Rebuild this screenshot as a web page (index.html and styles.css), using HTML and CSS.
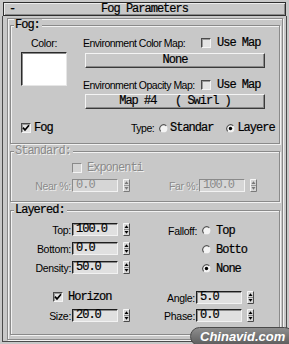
FILE: index.html
```html
<!DOCTYPE html>
<html>
<head>
<meta charset="utf-8">
<link rel="stylesheet" href="styles.css">
</head>
<body>
<div class="title">
  <span class="minus mono">-</span>
  <span class="mono">Fog Parameters</span>
  <span></span>
</div>
<div class="panel">
  <div class="inner">
    <div class="group fog">
      <div class="gtitle mono">Fog:</div>
      <div class="fog-top">
        <div class="color-col">
          <div class="line center">Color:</div>
          <div class="swatch"></div>
        </div>
        <div class="map-col">
          <div class="line"><span class="map-lbl">Environment Color Map:</span><span class="cb"></span><span class="mono use">Use Map</span></div>
          <div class="btn mono">None</div>
          <div class="line gap10"><span class="map-lbl">Environment Opacity Map:</span><span class="cb"></span><span class="mono use">Use Map</span></div>
          <div class="btn btn2 mono">Map #4   ( Swirl )</div>
        </div>
      </div>
      <div class="line fog-row">
        <span class="fog-check"><span class="cb"><svg class="ck" viewBox="0 0 8 8"><path d="M1 3.6L3 6L7 1.2" fill="none" stroke="#000" stroke-width="1.7"/></svg></span><span class="mono">Fog</span></span>
        <span class="type-lbl">Type:</span>
        <svg class="rb" viewBox="0 0 10 10"><circle cx="5" cy="5" r="4.3" fill="#f4f4f4"/><path d="M1.9 8.1A4.4 4.4 0 0 1 8.1 1.9" fill="none" stroke="#5a5a5a" stroke-width="1.3"/></svg><span class="mono">Standar</span>
        <svg class="rb r2" viewBox="0 0 10 10"><circle cx="5" cy="5" r="4.3" fill="#f4f4f4"/><path d="M1.9 8.1A4.4 4.4 0 0 1 8.1 1.9" fill="none" stroke="#5a5a5a" stroke-width="1.3"/><circle cx="5" cy="5" r="1.9" fill="#000"/></svg><span class="mono">Layere</span>
      </div>
    </div>

    <div class="group std">
      <div class="gtitle mono">Standard:</div>
      <div class="line exp-row"><span class="cb dis"></span><span class="mono">Exponenti</span></div>
      <div class="srow">
        <span class="lbl l61">Near %:</span><span class="field dis mono">0.0</span>
        <svg class="spin" viewBox="0 0 7 13"><rect width="7" height="13" fill="#d6d6d6"/><path d="M0.5 12.5V0.5H6.5" fill="none" stroke="#f6f6f6"/><path d="M6.5 0.5V12.5H0.5" fill="none" stroke="#7a7a7a"/><path d="M1 6.5H6" stroke="#9a9a9a"/><path d="M3.5 2.2L5.5 5H1.5Z" fill="#777"/><path d="M1.5 8H5.5L3.5 10.8Z" fill="#777"/></svg>
        <span class="lbl l69">Far %:</span><span class="field dis mono">100.0</span>
        <svg class="spin" viewBox="0 0 7 13"><rect width="7" height="13" fill="#d6d6d6"/><path d="M0.5 12.5V0.5H6.5" fill="none" stroke="#f6f6f6"/><path d="M6.5 0.5V12.5H0.5" fill="none" stroke="#7a7a7a"/><path d="M1 6.5H6" stroke="#9a9a9a"/><path d="M3.5 2.2L5.5 5H1.5Z" fill="#777"/><path d="M1.5 8H5.5L3.5 10.8Z" fill="#777"/></svg>
      </div>
    </div>

    <div class="group layered">
      <div class="gtitle mono">Layered:</div>
      <div class="ltop">
        <div class="spin-col">
          <div class="srow"><span class="lbl l61">Top:</span><span class="field mono">100.0</span>
            <svg class="spin" viewBox="0 0 7 13"><rect width="7" height="13" fill="#d6d6d6"/><path d="M0.5 12.5V0.5H6.5" fill="none" stroke="#f6f6f6"/><path d="M6.5 0.5V12.5H0.5" fill="none" stroke="#4a4a4a"/><path d="M1 6.5H6" stroke="#8a8a8a"/><path d="M3.5 2.2L5.5 5H1.5Z" fill="#000"/><path d="M1.5 8H5.5L3.5 10.8Z" fill="#000"/></svg></div>
          <div class="srow"><span class="lbl l61">Bottom:</span><span class="field mono">0.0</span>
            <svg class="spin" viewBox="0 0 7 13"><rect width="7" height="13" fill="#d6d6d6"/><path d="M0.5 12.5V0.5H6.5" fill="none" stroke="#f6f6f6"/><path d="M6.5 0.5V12.5H0.5" fill="none" stroke="#4a4a4a"/><path d="M1 6.5H6" stroke="#8a8a8a"/><path d="M3.5 2.2L5.5 5H1.5Z" fill="#000"/><path d="M1.5 8H5.5L3.5 10.8Z" fill="#000"/></svg></div>
          <div class="srow"><span class="lbl l61">Density:</span><span class="field mono">50.0</span>
            <svg class="spin" viewBox="0 0 7 13"><rect width="7" height="13" fill="#d6d6d6"/><path d="M0.5 12.5V0.5H6.5" fill="none" stroke="#f6f6f6"/><path d="M6.5 0.5V12.5H0.5" fill="none" stroke="#4a4a4a"/><path d="M1 6.5H6" stroke="#8a8a8a"/><path d="M3.5 2.2L5.5 5H1.5Z" fill="#000"/><path d="M1.5 8H5.5L3.5 10.8Z" fill="#000"/></svg></div>
        </div>
        <div class="falloff">
          <div class="srow"><span class="lbl l68">Falloff:</span><svg class="rb fr" viewBox="0 0 10 10"><circle cx="5" cy="5" r="4.3" fill="#f4f4f4"/><path d="M1.9 8.1A4.4 4.4 0 0 1 8.1 1.9" fill="none" stroke="#5a5a5a" stroke-width="1.3"/></svg><span class="mono">Top</span></div>
          <div class="srow sub"><svg class="rb fr" viewBox="0 0 10 10"><circle cx="5" cy="5" r="4.3" fill="#f4f4f4"/><path d="M1.9 8.1A4.4 4.4 0 0 1 8.1 1.9" fill="none" stroke="#5a5a5a" stroke-width="1.3"/></svg><span class="mono">Botto</span></div>
          <div class="srow sub"><svg class="rb fr" viewBox="0 0 10 10"><circle cx="5" cy="5" r="4.3" fill="#f4f4f4"/><path d="M1.9 8.1A4.4 4.4 0 0 1 8.1 1.9" fill="none" stroke="#5a5a5a" stroke-width="1.3"/><circle cx="5" cy="5" r="1.9" fill="#000"/></svg><span class="mono">None</span></div>
        </div>
      </div>
      <div class="lbottom">
        <div class="lb-left">
          <div class="line hor-row"><span class="cb"><svg class="ck" viewBox="0 0 8 8"><path d="M1 3.6L3 6L7 1.2" fill="none" stroke="#000" stroke-width="1.7"/></svg></span><span class="mono">Horizon</span></div>
          <div class="srow"><span class="lbl l61">Size:</span><span class="field mono">20.0</span>
            <svg class="spin" viewBox="0 0 7 13"><rect width="7" height="13" fill="#d6d6d6"/><path d="M0.5 12.5V0.5H6.5" fill="none" stroke="#f6f6f6"/><path d="M6.5 0.5V12.5H0.5" fill="none" stroke="#4a4a4a"/><path d="M1 6.5H6" stroke="#8a8a8a"/><path d="M3.5 2.2L5.5 5H1.5Z" fill="#000"/><path d="M1.5 8H5.5L3.5 10.8Z" fill="#000"/></svg></div>
        </div>
        <div class="lb-right">
          <div class="srow"><span class="lbl l66">Angle:</span><span class="field mono">5.0</span>
            <svg class="spin" viewBox="0 0 7 13"><rect width="7" height="13" fill="#d6d6d6"/><path d="M0.5 12.5V0.5H6.5" fill="none" stroke="#f6f6f6"/><path d="M6.5 0.5V12.5H0.5" fill="none" stroke="#4a4a4a"/><path d="M1 6.5H6" stroke="#8a8a8a"/><path d="M3.5 2.2L5.5 5H1.5Z" fill="#000"/><path d="M1.5 8H5.5L3.5 10.8Z" fill="#000"/></svg></div>
          <div class="srow"><span class="lbl l66">Phase:</span><span class="field mono">0.0</span>
            <svg class="spin" viewBox="0 0 7 13"><rect width="7" height="13" fill="#d6d6d6"/><path d="M0.5 12.5V0.5H6.5" fill="none" stroke="#f6f6f6"/><path d="M6.5 0.5V12.5H0.5" fill="none" stroke="#4a4a4a"/><path d="M1 6.5H6" stroke="#8a8a8a"/><path d="M3.5 2.2L5.5 5H1.5Z" fill="#000"/><path d="M1.5 8H5.5L3.5 10.8Z" fill="#000"/></svg></div>
        </div>
      </div>
    </div>
  </div>
</div>
<div class="wm">Chinavid.com</div>
</body>
</html>
```

FILE: styles.css
```css
* { box-sizing: border-box; }
html, body { margin: 0; padding: 0; }
body {
  width: 289px; height: 344px; overflow: hidden; position: relative;
  background: #c8c8c8; color: #000;
  font-family: "Liberation Sans", Arial, sans-serif; font-size: 10.5px;
  letter-spacing: -0.3px; white-space: nowrap;
}
.mono {
  font-family: "Liberation Mono", "DejaVu Sans Mono", monospace;
  font-size: 12px; letter-spacing: -1px; white-space: pre;
  -webkit-text-stroke: 0.2px #000;
}
.title {
  margin: 2px 3px 0; height: 14px;
  border: 1px solid #2e2e2e;
  box-shadow: inset 1px 1px 0 #ececec, inset -1px -1px 0 #8a8a8a;
  display: grid; grid-template-columns: 1fr auto 1fr; align-items: center;
  line-height: 12px;
}
.minus { padding-left: 5px; }
.panel {
  margin-left: 2px; width: 285px; height: 326px;
  border: 1px solid #4a4a4a; border-top: 0;
  padding: 2px 3px 1px 4px;
}
.inner {
  height: 100%;
  border: 1px solid #8a8a8a;
  box-shadow: inset 1px 1px 0 #f2f2f2, 1px 1px 0 #f2f2f2;
  padding: 6px 2px 0;
}
.group {
  border: 1px solid #8a8a8a;
  box-shadow: inset 1px 1px 0 #f2f2f2, 1px 1px 0 #f2f2f2;
}
.gtitle {
  width: fit-content; height: 13px; line-height: 13px;
  margin: -7px 0 0 3px; padding: 0 2px 0 1px;
  background: #c8c8c8;
}
.line { display: flex; align-items: center; height: 14px; line-height: 14px; }
.center { justify-content: center; }

/* Fog */
.fog { padding-bottom: 8px; }
.fog-top { display: flex; margin-top: 4px; }
.color-col { margin-left: 10px; width: 46px; }
.swatch {
  margin-top: 2px; width: 46px; height: 34px; background: #fff;
  border: 1px solid; border-color: #2a2a2a #e6e6e6 #e6e6e6 #2a2a2a;
  box-shadow: inset 1px 1px 0 #8a8a8a;
}
.map-col { margin-left: 16px; }
.map-lbl { width: 118px; flex: none; letter-spacing: -0.5px; }
.use { margin-left: 6px; }
.btn {
  margin-top: 3px; margin-left: 2px; width: 180px; height: 15px;
  border: 1px solid; border-color: #f4f4f4 #3a3a3a #3a3a3a #f4f4f4;
  box-shadow: inset -1px -1px 0 #8a8a8a;
  text-align: center; line-height: 13px;
}
.btn2 { margin-top: 2px; }
.gap10 { margin-top: 10px; }
.fog-row { margin-top: 12px; padding-left: 10px; }
.fog-check { width: 110px; display: flex; align-items: center; }
.fog-check .mono { margin-left: 3px; }
.type-lbl { width: 28px; flex: none; letter-spacing: -0.5px; }

.cb {
  width: 10px; height: 10px; flex: none; display: inline-flex;
  background: #e4e4e4;
  border: 1px solid; border-color: #4a4a4a #f4f4f4 #f4f4f4 #4a4a4a;
  box-shadow: inset 1px 1px 0 #9a9a9a;
}
.cb.dis { background: #d4d4d4; border-color: #8a8a8a #f4f4f4 #f4f4f4 #8a8a8a; box-shadow: none; }
.ck { width: 8px; height: 8px; display: block; }
.rb { width: 9px; height: 9px; flex: none; margin-right: 2px; }
.r2 { margin-left: 13px; }

/* Standard */
.std { margin-top: 7px; padding-bottom: 9px; }
.std .mono, .std .lbl { color: #8a8a8a; text-shadow: 1px 1px 0 #efefef; -webkit-text-stroke: 0; }
.exp-row { margin-top: 3px; padding-left: 61px; }
.exp-row .mono { margin-left: 5px; }
.std .srow { margin-top: 4px; }

.srow { display: flex; align-items: center; height: 13px; }
.lbl { text-align: right; padding-right: 1px; flex: none; }
.l61 { width: 61px; }
.l66 { width: 66px; }
.l68 { width: 68px; }
.l69 { width: 69px; }
.field {
  width: 46px; height: 13px; flex: none;
  display: flex; align-items: center; padding-left: 3px;
  background: #e0e0e0; line-height: 11px;
  border: 1px solid; border-color: #1e1e1e #f2f2f2 #f2f2f2 #1e1e1e;
  box-shadow: inset 1px 1px 0 #8a8a8a;
}
.field.dis {
  background: #d6d6d6;
  border-color: #8a8a8a #f2f2f2 #f2f2f2 #8a8a8a; box-shadow: none;
}
.std .field.dis { text-shadow: none; }
.spin { width: 7px; height: 13px; flex: none; margin-left: 5px; }

/* Layered */
.layered { margin-top: 8px; padding-bottom: 12px; }
.ltop { display: flex; margin-top: 6px; }
.spin-col { width: 119px; display: flex; flex-direction: column; gap: 6px; }
.falloff { display: flex; flex-direction: column; gap: 6px; margin-top: 1px; }
.fr { margin-left: 4px; margin-right: 5px; }
.sub { padding-left: 68px; }
.lbottom { display: flex; margin-top: 15px; }
.lb-left { width: 119px; }
.hor-row { padding-left: 42px; }
.hor-row .mono { margin-left: 5px; }
.lb-left .srow { margin-top: 5px; }
.lb-right .srow { margin-top: 5px; }
.lb-right .srow:first-child { margin-top: 1px; }

/* watermark */
.wm {
  position: absolute; left: 190px; top: 327px; width: 104px; height: 19px;
  border-radius: 10px; border: 1px solid #4a4a4a;
  background: linear-gradient(#8e8e8e, #5c5c5c);
  color: #fff; font: italic bold 13px/17px "Liberation Sans", Arial, sans-serif;
  letter-spacing: 0; padding-left: 9px;
}
```
